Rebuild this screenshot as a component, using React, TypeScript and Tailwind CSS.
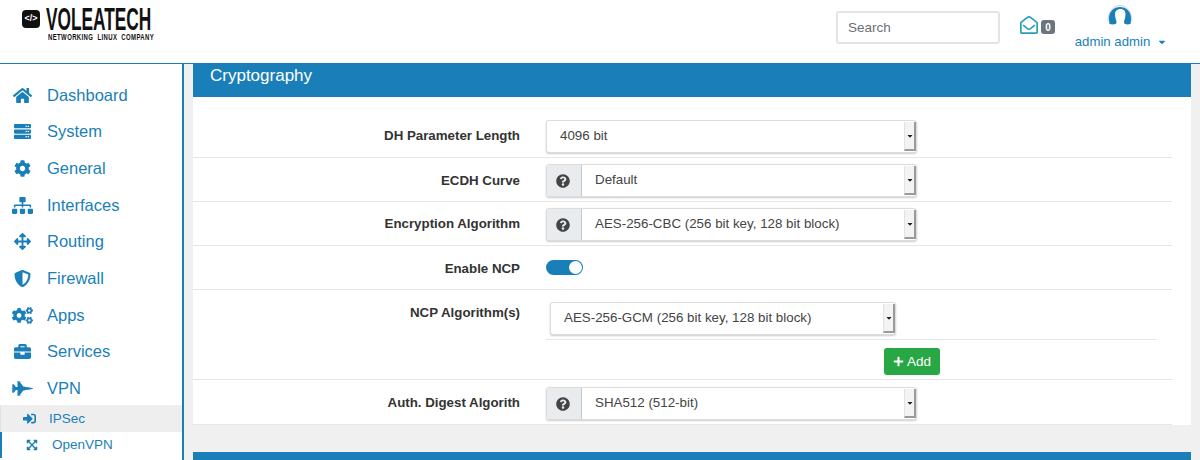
import { ReactNode } from 'react'
import { IconType } from 'react-icons'
import {
  FaBriefcase,
  FaCaretDown,
  FaCog,
  FaCogs,
  FaExpandArrowsAlt,
  FaFighterJet,
  FaHome,
  FaArrowsAlt,
  FaPlus,
  FaQuestionCircle,
  FaRegEnvelopeOpen,
  FaServer,
  FaShieldAlt,
  FaSignInAlt,
  FaSitemap,
} from 'react-icons/fa'

const NAV: [string, IconType, string][] = [
  ['Dashboard', FaHome, 'text-[19px]'],
  ['System', FaServer, 'text-[17px]'],
  ['General', FaCog, 'text-[17px]'],
  ['Interfaces', FaSitemap, 'text-[21px]'],
  ['Routing', FaArrowsAlt, 'text-[17px]'],
  ['Firewall', FaShieldAlt, 'text-[17px]'],
  ['Apps', FaCogs, 'text-[21px]'],
  ['Services', FaBriefcase, 'text-[17px]'],
  ['VPN', FaFighterJet, 'text-[21px]'],
]

function Logo() {
  return (
    <div className="flex items-start pl-[22px] pt-[10px]">
      <div className="flex h-[18px] w-[18px] items-center justify-center rounded-[4px] bg-[#111] text-[9px] font-bold text-white">
        &lt;/&gt;
      </div>
      <div className="-mt-[3px] ml-[6px] w-[108px] text-[#111]">
        <div className="h-[24px] origin-left scale-x-[0.54] whitespace-nowrap text-[32px] font-bold leading-[24px]">
          VOLEATECH
        </div>
        <div className="ml-[2px] mt-[1px] h-[9px] origin-left scale-x-[0.63] whitespace-nowrap text-[9.500px] font-bold leading-[9px] tracking-[0.6px]">
          NETWORKING&nbsp;&nbsp;LINUX&nbsp;&nbsp;COMPANY
        </div>
      </div>
    </div>
  )
}

function Avatar() {
  return (
    <svg viewBox="0 0 26 20" className="h-[20px] w-[26px]">
      <path d="M1 16C1 8 6 .5 13 .5S25 8 25 16" fill="none" stroke="#b9d8e8" strokeWidth="1" />
      <path
        d="M2.500 19C2 17 2 15 2 13 2 6.500 7 2 13 2s11 4.500 11 11c0 2 0 4-.5 6-2 .5-4 .5-5.500 0-1.500-1-1-2.500-.5-4 .6-2 1-4 1-6 0-2.500-1.500-5-5-5S8 6.500 8 9c0 2 .4 4 1 6 .5 1.500 1 3-.5 4-1.500.5-4 .5-6 0z"
        fill="#1a7fb8"
      />
    </svg>
  )
}

function Header() {
  return (
    <header className="flex h-[63px] bg-white">
      <div className="w-[183px]">
        <Logo />
      </div>
      <div className="ml-auto flex items-start">
        <div className="mt-[11px] flex h-[33px] w-[164px] items-center rounded-[3px] border-2 border-[#e4e4e4] pl-[10px] pt-[1px] text-[13.500px] text-[#6b7075]">
          Search
        </div>
        <FaRegEnvelopeOpen className="ml-[20px] mt-[16px] text-[18px] text-[#2a9fbc]" />
        <span className="ml-[3px] mt-[20px] flex h-[14px] w-[14px] items-center justify-center rounded-[3px] bg-[#6c757d] text-[10px] font-bold text-white">
          0
        </span>
        <div className="ml-[19px] mr-[34px] mt-[5px] flex w-[92px] flex-col items-center">
          <Avatar />
          <div className="ml-[2px] mt-[8px] flex items-center whitespace-nowrap text-[13.200px] leading-[18px] text-[#1a7fb8]">
            admin admin
            <FaCaretDown className="ml-[7px] text-[10px]" />
          </div>
        </div>
      </div>
    </header>
  )
}

function Sidebar() {
  return (
    <aside className="h-full w-[184px] shrink-0 border-r-2 border-[#1a7fb8] bg-white pt-[12.700px]">
      {NAV.map(([label, Icon, size]) => (
        <div key={label} className="flex h-[36.700px] items-center text-[#1a7fb8]">
          <span className={`flex w-[47px] shrink-0 justify-center pr-[3px] pl-0 ${size}`}>
            <Icon />
          </span>
          <span className="text-[16.500px]">{label}</span>
        </div>
      ))}
      <div className="-mt-[1.700px] flex h-[27px] items-center border-l border-[#e0e0e0] bg-[#eeeeee] text-[13.500px] text-[#1a7fb8]">
        <FaSignInAlt className="ml-[22px] text-[13px]" />
        <span className="ml-[13px]">IPSec</span>
      </div>
      <div className="flex h-[26px] items-center border-l-2 border-[#1a7fb8] text-[13.500px] text-[#1a7fb8]">
        <FaExpandArrowsAlt className="ml-[24px] text-[12px]" />
        <span className="ml-[14px]">OpenVPN</span>
      </div>
    </aside>
  )
}

function Select({ value, help, width = 'w-[371px]' }: { value: string; help?: boolean; width?: string }) {
  return (
    <div className={`flex h-[33px] ${width} overflow-hidden rounded-[3px] border border-[#dcdcdc] bg-white text-[13.350px] text-[#444] shadow-[0_1px_2px_#ccc]`}>
      {help && (
        <span className="flex w-[35px] shrink-0 items-center justify-center border-r border-[#c8c8c8] bg-[#e9ecef] pr-[2px] text-[#444]">
          <FaQuestionCircle className="text-[14px]" />
        </span>
      )}
      <span className="flex flex-1 items-center pb-[1px] pl-[13px]">{value}</span>
      <span className="my-[1px] flex w-[12px] shrink-0 items-center justify-center border-r-2 border-b-2 border-l border-[#9a9a9a] border-l-[#e2e2e2] bg-[#f3f3f3] text-[8px] text-[#222]">
        <FaCaretDown />
      </span>
    </div>
  )
}

function Row({ label, children, className }: { label: string; children: ReactNode; className: string }) {
  return (
    <div className={`flex border-b border-[#e6e6e6] ${className}`}>
      <div className="w-[327px] pt-[1px] text-right text-[13.300px] font-bold text-[#333]">{label}</div>
      <div className="ml-[26px] flex-1">{children}</div>
    </div>
  )
}

function Cryptography() {
  return (
    <section className="mr-[9px] bg-white">
      <div className="h-[33px] bg-[#1a7fb8] pl-[17px] text-[17px] leading-[24px] text-white">Cryptography</div>
      <div className="pr-[19px]">
        <Row label="DH Parameter Length" className="h-[61px] pt-[23px] leading-[30px]">
          <Select value="4096 bit" />
        </Row>
        <Row label="ECDH Curve" className="h-[44px] pt-[6px] leading-[32px]">
          <Select value="Default" help />
        </Row>
        <Row label="Encryption Algorithm" className="h-[44px] pt-[6px] leading-[30px]">
          <Select value="AES-256-CBC (256 bit key, 128 bit block)" help />
        </Row>
        <Row label="Enable NCP" className="h-[44px] pt-[7px] leading-[30px]">
          <div className="mt-[7px] flex h-[15px] w-[37px] items-center justify-end rounded-full bg-[#1a7fb8] pr-[1px]">
            <span className="h-[13px] w-[13px] rounded-full bg-white" />
          </div>
        </Row>
        <Row label="NCP Algorithm(s)" className="h-[90px] pt-[12px] leading-[20px]">
          <div className="mr-[16px] flex h-[38px] items-start border-b border-[#e6e6e6] pl-[4px]">
            <Select value="AES-256-GCM (256 bit key, 128 bit block)" width="w-[346px]" />
          </div>
          <div className="ml-[338px] mt-[8px] flex h-[27px] w-[56px] items-center justify-center rounded-[3px] bg-[#28a745] text-[13.500px] text-white">
            <FaPlus className="mr-[3px] text-[11px]" />
            Add
          </div>
        </Row>
        <Row label="Auth. Digest Algorith" className="h-[45px] pt-[7px] leading-[30px]">
          <Select value="SHA512 (512-bit)" help />
        </Row>
      </div>
    </section>
  )
}

export default function App() {
  return (
    <div className="h-[460px] w-[1200px] overflow-hidden bg-white font-['Liberation_Sans',Arial,sans-serif]">
      <Header />
      <div className="flex h-[397px] border-t border-[#1a7fb8]">
        <Sidebar />
        <main className="flex-1 overflow-hidden bg-[#f0f0f0] pl-[9px]">
          <Cryptography />
          <div className="mr-[9px] mt-[27px] h-[20px] bg-[#1a7fb8]" />
        </main>
      </div>
    </div>
  )
}
